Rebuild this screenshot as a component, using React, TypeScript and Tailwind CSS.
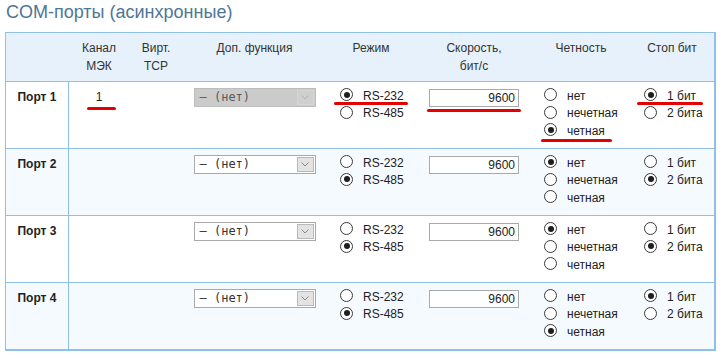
import React from "react";

type Port = {
  name: string;
  iec: string;
  disabled: boolean;
  mode: number;
  speed: string;
  parity: number;
  stop: number;
};

const ports: Port[] = [
  { name: "Порт 1", iec: "1", disabled: true, mode: 0, speed: "9600", parity: 2, stop: 0 },
  { name: "Порт 2", iec: "", disabled: false, mode: 1, speed: "9600", parity: 0, stop: 1 },
  { name: "Порт 3", iec: "", disabled: false, mode: 1, speed: "9600", parity: 0, stop: 1 },
  { name: "Порт 4", iec: "", disabled: false, mode: 1, speed: "9600", parity: 2, stop: 0 },
];

const cols = "grid grid-cols-[63px_60px_54px_143px_90px_116px_98px_84px]";

const Radio = ({ checked, label }: { checked: boolean; label: string }) => (
  <div className="flex items-center h-[17.5px]">
    <span className="w-[13px] h-[13px] -mt-[2px] rounded-full border border-[#3a3a3a] bg-white flex items-center justify-center shrink-0">
      {checked && <span className="w-[6px] h-[6px] rounded-full bg-[#1e1e1e]" />}
    </span>
    <span className="ml-[10px]">{label}</span>
  </div>
);

const Select = ({ disabled }: { disabled: boolean }) => (
  <div
    className={
      "flex w-[122px] h-[19px] border items-stretch " +
      (disabled ? "bg-[#cbcbcb] border-[#bdbdbd] text-[#5a5a5a]" : "bg-white border-[#a9a9a9] text-[#333]")
    }
  >
    <span className="flex-1 pl-[5px] leading-[17px] text-[12px] font-['DejaVu_Sans_Mono',monospace]">
      – (нет)
    </span>
    <span
      className={
        "w-[17px] m-[1px] flex items-center justify-center border " +
        (disabled ? "border-[#d6d6d6] bg-[#cfcfcf]" : "border-[#b9b9b9] bg-[#e3e3e3]")
      }
    >
      <svg width="8" height="5" viewBox="0 0 8 5">
        <path d="M0.5 0.5 L4 4 L7.5 0.5" fill="none" stroke={disabled ? "#b0b0b0" : "#8a8a8a"} strokeWidth="1" />
      </svg>
    </span>
  </div>
);

export default function App() {
  return (
    <div className="relative w-[723px] h-[358px] bg-white text-[#222] text-[12px] font-['Liberation_Sans',Arial,sans-serif]">
      <div className="pl-[6px] h-[24px] leading-[24px] text-[18px] text-[#4e7696]">COM-порты (асинхронные)</div>

      <div className="mt-[8px] ml-[5px] w-[711px] border border-r-2 border-b-2 border-[#8fc1e8]">
        <div className={cols + " h-[49px] bg-[#e6f1fb] border-b border-[#8fc1e8] leading-[18px] pt-[6px] text-[#333] text-center"}>
          <div />
          <div>Канал<br />МЭК</div>
          <div>Вирт.<br />TCP</div>
          <div>Доп. функция</div>
          <div>Режим</div>
          <div>Скорость,<br />бит/с</div>
          <div>Четность</div>
          <div>Стоп бит</div>
        </div>

        {ports.map((p, i) => (
          <div
            key={p.name}
            className={
              cols +
              " " +
              (i < ports.length - 1 ? "h-[67px] border-b border-[#8fc1e8] " : "h-[66px] ") +
              (i % 2 === 1 ? "bg-[#f5faff]" : "bg-white")
            }
          >
            <div className="border-r border-[#8fc1e8] pt-[6px] leading-[18px] text-center font-bold">{p.name}</div>
            <div className="pt-[6px] leading-[18px] text-center">{p.iec}</div>
            <div />
            <div className="pt-[6px] flex justify-center">
              <Select disabled={p.disabled} />
            </div>
            <div className="pt-[5px] pl-[14px]">
              <Radio checked={p.mode === 0} label="RS-232" />
              <Radio checked={p.mode === 1} label="RS-485" />
            </div>
            <div className="pt-[7px] pl-[13px]">
              <div className="w-[90px] h-[18px] border border-[#a9a9a9] bg-white text-right pr-[3px] leading-[16px]">
                {p.speed}
              </div>
            </div>
            <div className="pt-[5px] pl-[12px]">
              <Radio checked={p.parity === 0} label="нет" />
              <Radio checked={p.parity === 1} label="нечетная" />
              <Radio checked={p.parity === 2} label="четная" />
            </div>
            <div className="pt-[5px] pl-[14px]">
              <Radio checked={p.stop === 0} label="1 бит" />
              <Radio checked={p.stop === 1} label="2 бита" />
            </div>
          </div>
        ))}
      </div>

      {/* red annotation marks */}
      <span className="absolute left-[87px] top-[107px] w-[29px] h-[3px] rounded-full bg-[#e60000]" />
      <span className="absolute left-[334px] top-[102px] w-[74px] h-[3px] rounded-full bg-[#e60000]" />
      <span className="absolute left-[427px] top-[109px] w-[94px] h-[3px] rounded-full bg-[#e60000]" />
      <span className="absolute left-[541px] top-[139px] w-[71px] h-[3px] rounded-full bg-[#e60000]" />
      <span className="absolute left-[637px] top-[102px] w-[66px] h-[3px] rounded-full bg-[#e60000]" />
    </div>
  );
}
